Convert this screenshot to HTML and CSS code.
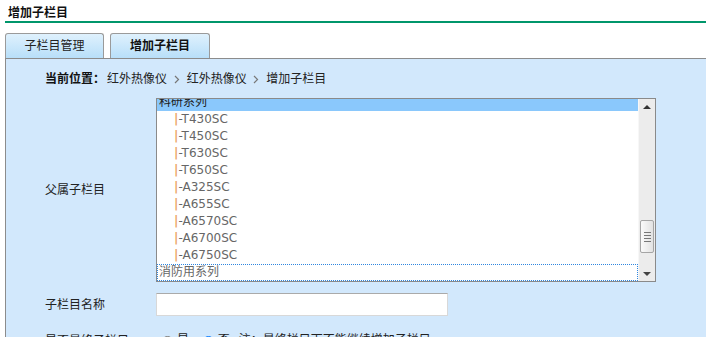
FILE: index.html
```html
<!DOCTYPE html>
<html lang="zh-CN">
<head>
  <meta charset="UTF-8">
  <title>增加子栏目</title>
  <link rel="stylesheet" href="styles.css">
</head>
<body>
  <h2 class="page-title">增加子栏目</h2>

  <div class="tabs">
    <a class="tab">子栏目管理</a>
    <a class="tab active">增加子栏目</a>
  </div>

  <div class="panel">
    <div class="crumbs">
      <b>当前位置：</b>红外热像仪
      <svg class="sep" width="6" height="9" viewBox="0 0 6 9"><polyline points="1,1 4.5,4.5 1,8" fill="none" stroke="#777" stroke-width="1.2"/></svg>
      红外热像仪
      <svg class="sep" width="6" height="9" viewBox="0 0 6 9"><polyline points="1,1 4.5,4.5 1,8" fill="none" stroke="#777" stroke-width="1.2"/></svg>
      增加子栏目
    </div>

    <div class="row row-parent">
      <div class="label">父属子栏目</div>
      <div class="listbox">
        <ul class="options">
          <li class="selected">科研系列</li>
          <li><span class="bar">|</span>-T430SC</li>
          <li><span class="bar">|</span>-T450SC</li>
          <li><span class="bar">|</span>-T630SC</li>
          <li><span class="bar">|</span>-T650SC</li>
          <li><span class="bar">|</span>-A325SC</li>
          <li><span class="bar">|</span>-A655SC</li>
          <li><span class="bar">|</span>-A6570SC</li>
          <li><span class="bar">|</span>-A6700SC</li>
          <li><span class="bar">|</span>-A6750SC</li>
          <li class="focused">消防用系列</li>
        </ul>
        <div class="scrollbar">
          <div class="arrow up"></div>
          <div class="thumb"><i></i><i></i><i></i><i></i></div>
          <div class="arrow down"></div>
        </div>
      </div>
    </div>

    <div class="row row-name">
      <div class="label">子栏目名称</div>
      <input type="text" class="text-input">
    </div>

    <div class="row row-final">
      <div class="label">是否最终子栏目</div>
      <div class="choices">
        <label><input type="radio" name="final">是</label>
        <label><input type="radio" name="final" checked>否</label>
        <span class="note">注：最终栏目下不能继续增加子栏目</span>
      </div>
    </div>
  </div>
</body>
</html>
```

FILE: styles.css
```css
html, body{
  margin: 0;
  height: 100%;
  overflow: hidden;
  background: #fff;
}
body{
  font: 12px/16px "DejaVu Sans", "Noto Sans CJK SC", sans-serif;
  color: #222;
}
.page-title{
  margin: 0 0 0 5px;
  padding: 6px 0 1px 3px;
  font-size: 12px;
  line-height: 14px;
  font-weight: bold;
  color: #111;
  border-bottom: 2px solid #00966b;
}

/* tabs */
.tabs{
  display: flex;
  gap: 6px;
  margin: 10px 0 0 5px;
}
.tab{
  box-sizing: border-box;
  width: 99px;
  height: 25px;
  line-height: 24px;
  text-align: center;
  border: 1px solid #9a9a9a;
  border-bottom: none;
  border-radius: 3px 3px 0 0;
  background: linear-gradient(#dff1fd, #b8dff9);
  color: #222;
}
.tab.active{
  width: 100px;
  font-weight: bold;
  color: #111;
}

/* panel */
.panel{
  margin-left: 5px;
  border-top: 1px solid #8c8c8c;
  border-left: 1px solid #8c8c8c;
  background: #d2e8fc;
  padding: 12px 0 0 39px;
  min-height: 400px;
}
.crumbs{
  line-height: 16px;
  color: #222;
}
.crumbs b{
  color: #111;
  margin-right: 2px;
}
.crumbs .sep{
  margin: 0 3px;
  vertical-align: -1px;
}

.row{
  display: grid;
  grid-template-columns: 111px auto;
  align-items: center;
  justify-items: start;
}
.row-parent{
  margin-top: 11px;
}
.row-name{
  margin-top: 11px;
}
.row-final{
  margin-top: 16px;
}

/* listbox */
.listbox{
  display: flex;
  width: 498px;
  height: 182px;
  border: 1px solid #8a8a8a;
  background: #fff;
  overflow: hidden;
}
.options{
  flex: 1;
  list-style: none;
  margin: -5px 0 0;
  padding: 0;
}
.options li{
  height: 17px;
  line-height: 17px;
  padding-left: 2px;
  color: #666;
  white-space: nowrap;
}
.options li .bar{
  color: #eca366;
  font-weight: bold;
  margin-left: 15px;
}
.options li.selected{
  background: #8ac8fc;
  color: #222;
}
.options li.focused{
  outline: 1px dotted #2f86e0;
  outline-offset: -1px;
}

.scrollbar{
  width: 16px;
  display: flex;
  flex-direction: column;
  background: #ececec;
  border-left: 1px solid #f7f7f7;
}
.arrow{
  height: 17px;
  position: relative;
}
.arrow::after{
  content: "";
  position: absolute;
  left: 4px;
  border-left: 4px solid transparent;
  border-right: 4px solid transparent;
}
.arrow.up::after{
  top: 6px;
  border-bottom: 4px solid #333;
}
.arrow.down::after{
  top: 8px;
  border-top: 4px solid #444;
}
.thumb{
  margin: auto 1px 11px 1px;
  height: 31px;
  border: 1px solid #a5a5a5;
  border-radius: 2px;
  background: linear-gradient(90deg, #fafafa, #e2e2e2);
  display: flex;
  flex-direction: column;
  justify-content: center;
  align-items: center;
  gap: 2px;
}
.thumb i{
  display: block;
  width: 7px;
  height: 1px;
  background: #777;
}

/* text input */
.text-input{
  box-sizing: border-box;
  width: 292px;
  height: 23px;
  margin: 0;
  border: 1px solid #d8d8d8;
  border-top-color: #aaa;
  background: #fff;
  font: inherit;
}

.choices label{
  margin-right: 4px;
}
.choices input{
  margin: 0 3px 0 5px;
  vertical-align: -5px;
}
.note{
  margin-left: 1px;
}
```
